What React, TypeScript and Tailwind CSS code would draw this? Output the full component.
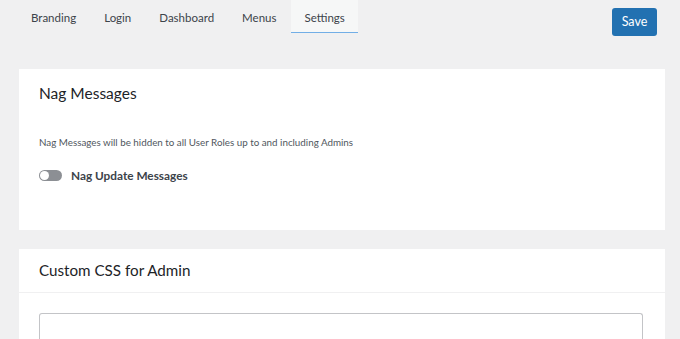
const tabs = ["Branding", "Login", "Dashboard", "Menus", "Settings"];

export default function App() {
  return (
    <main
      className="min-h-[339px] bg-[#f0f0f1] text-[#1d2327]"
      style={{ fontFamily: 'Lato, "Noto Sans", sans-serif' }}
    >
      <nav className="flex items-start justify-between pl-[18px] pr-[23px]">
        <div className="flex gap-[2px]">
          {tabs.map((t) => (
            <a
              key={t}
              href="#"
              className={
                t === "Settings"
                  ? "h-[33px] border-b border-[#72aee6] bg-[#f6f7f7] px-[13px] pt-[9px] text-[11.5px] text-[#3c434a]"
                  : "h-[33px] px-[13px] pt-[9px] text-[11.5px] text-[#3c434a]"
              }
            >
              {t}
            </a>
          ))}
        </div>
        <button className="mt-[8px] h-[28px] w-[45px] rounded-[3px] bg-[#2271b1] text-[12.5px] text-white">
          Save
        </button>
      </nav>

      <section className="ml-[19px] mr-[15px] mt-[33px] h-[161px] bg-white px-[20px] pt-[12px]">
        <h2 className="text-[15.5px] leading-[24px]">Nag Messages</h2>
        <p className="mt-[30px] text-[9.8px] leading-[14px] text-[#50575e]">
          Nag Messages will be hidden to all User Roles up to and including Admins
        </p>
        <label className="mt-[18px] flex items-center gap-[9px]">
          <span className="flex h-[11px] w-[23px] items-center rounded-full bg-[#8c8f94] p-[1px]">
            <span className="h-[9px] w-[9px] rounded-full bg-white" />
          </span>
          <span className="text-[11.8px] font-bold text-[#3c434a]">Nag Update Messages</span>
        </label>
      </section>

      <section className="ml-[19px] mr-[15px] mt-[19px] bg-white">
        <div className="flex h-[44px] items-center border-b border-[#f0f0f1] px-[20px]">
          <h2 className="text-[15.2px]">Custom CSS for Admin</h2>
        </div>
        <div className="pl-[20px] pr-[22px] pt-[20px]">
          <div className="h-[40px] rounded-t-[3px] border border-b-0 border-[#c3c4c7]" />
        </div>
      </section>
    </main>
  );
}
